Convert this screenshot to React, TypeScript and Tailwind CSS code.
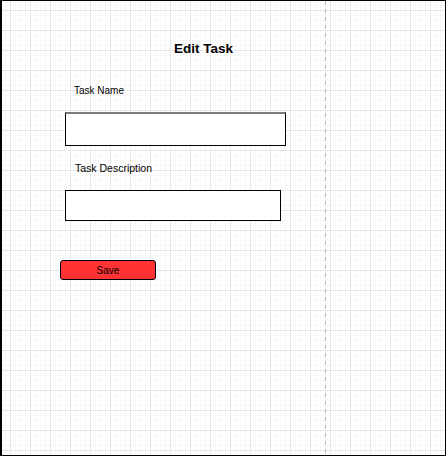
export default function App() {
  return (
    <div className="relative w-[446px] h-[456px] bg-white border-l-2 border-t border-r border-b border-black overflow-hidden font-['Liberation_Sans',Arial,sans-serif] text-black bg-[linear-gradient(to_right,#e6e6e6_1px,transparent_1px),linear-gradient(to_bottom,#e6e6e6_1px,transparent_1px),linear-gradient(to_right,#f8f8f8_1px,transparent_1px),linear-gradient(to_bottom,#f8f8f8_1px,transparent_1px)] bg-[size:20px_20px,20px_20px,5px_5px,5px_5px] bg-[position:8px_9px,8px_9px,3px_4px,3px_4px]">
      <div className="absolute left-[323px] top-0 bottom-0 w-px bg-[linear-gradient(to_bottom,#b8b8b8_4px,transparent_4px)] bg-[size:1px_8px]" />
      <div className="flex flex-col items-start pl-[63px]">
        <div className="mt-[40px] ml-[109px] text-[13.5px] leading-[16px] font-bold">Edit Task</div>
        <div className="mt-[28px] ml-[9px] text-[10px] leading-[12px]">Task Name</div>
        <div className="mt-[15px] w-[221px] h-[34px] bg-white border border-black border-t-2 border-t-[#7a7a7a]" />
        <div className="mt-[16px] ml-[10px] text-[10.5px] leading-[12px]">Task Description</div>
        <div className="mt-[16px] w-[216px] h-[31px] bg-white border border-black" />
        <button className="mt-[39px] -ml-[5px] w-[96px] h-[20px] bg-[#ff3333] border border-black rounded-[3px] text-[10px] leading-[20px] text-center">
          Save
        </button>
      </div>
    </div>
  );
}
